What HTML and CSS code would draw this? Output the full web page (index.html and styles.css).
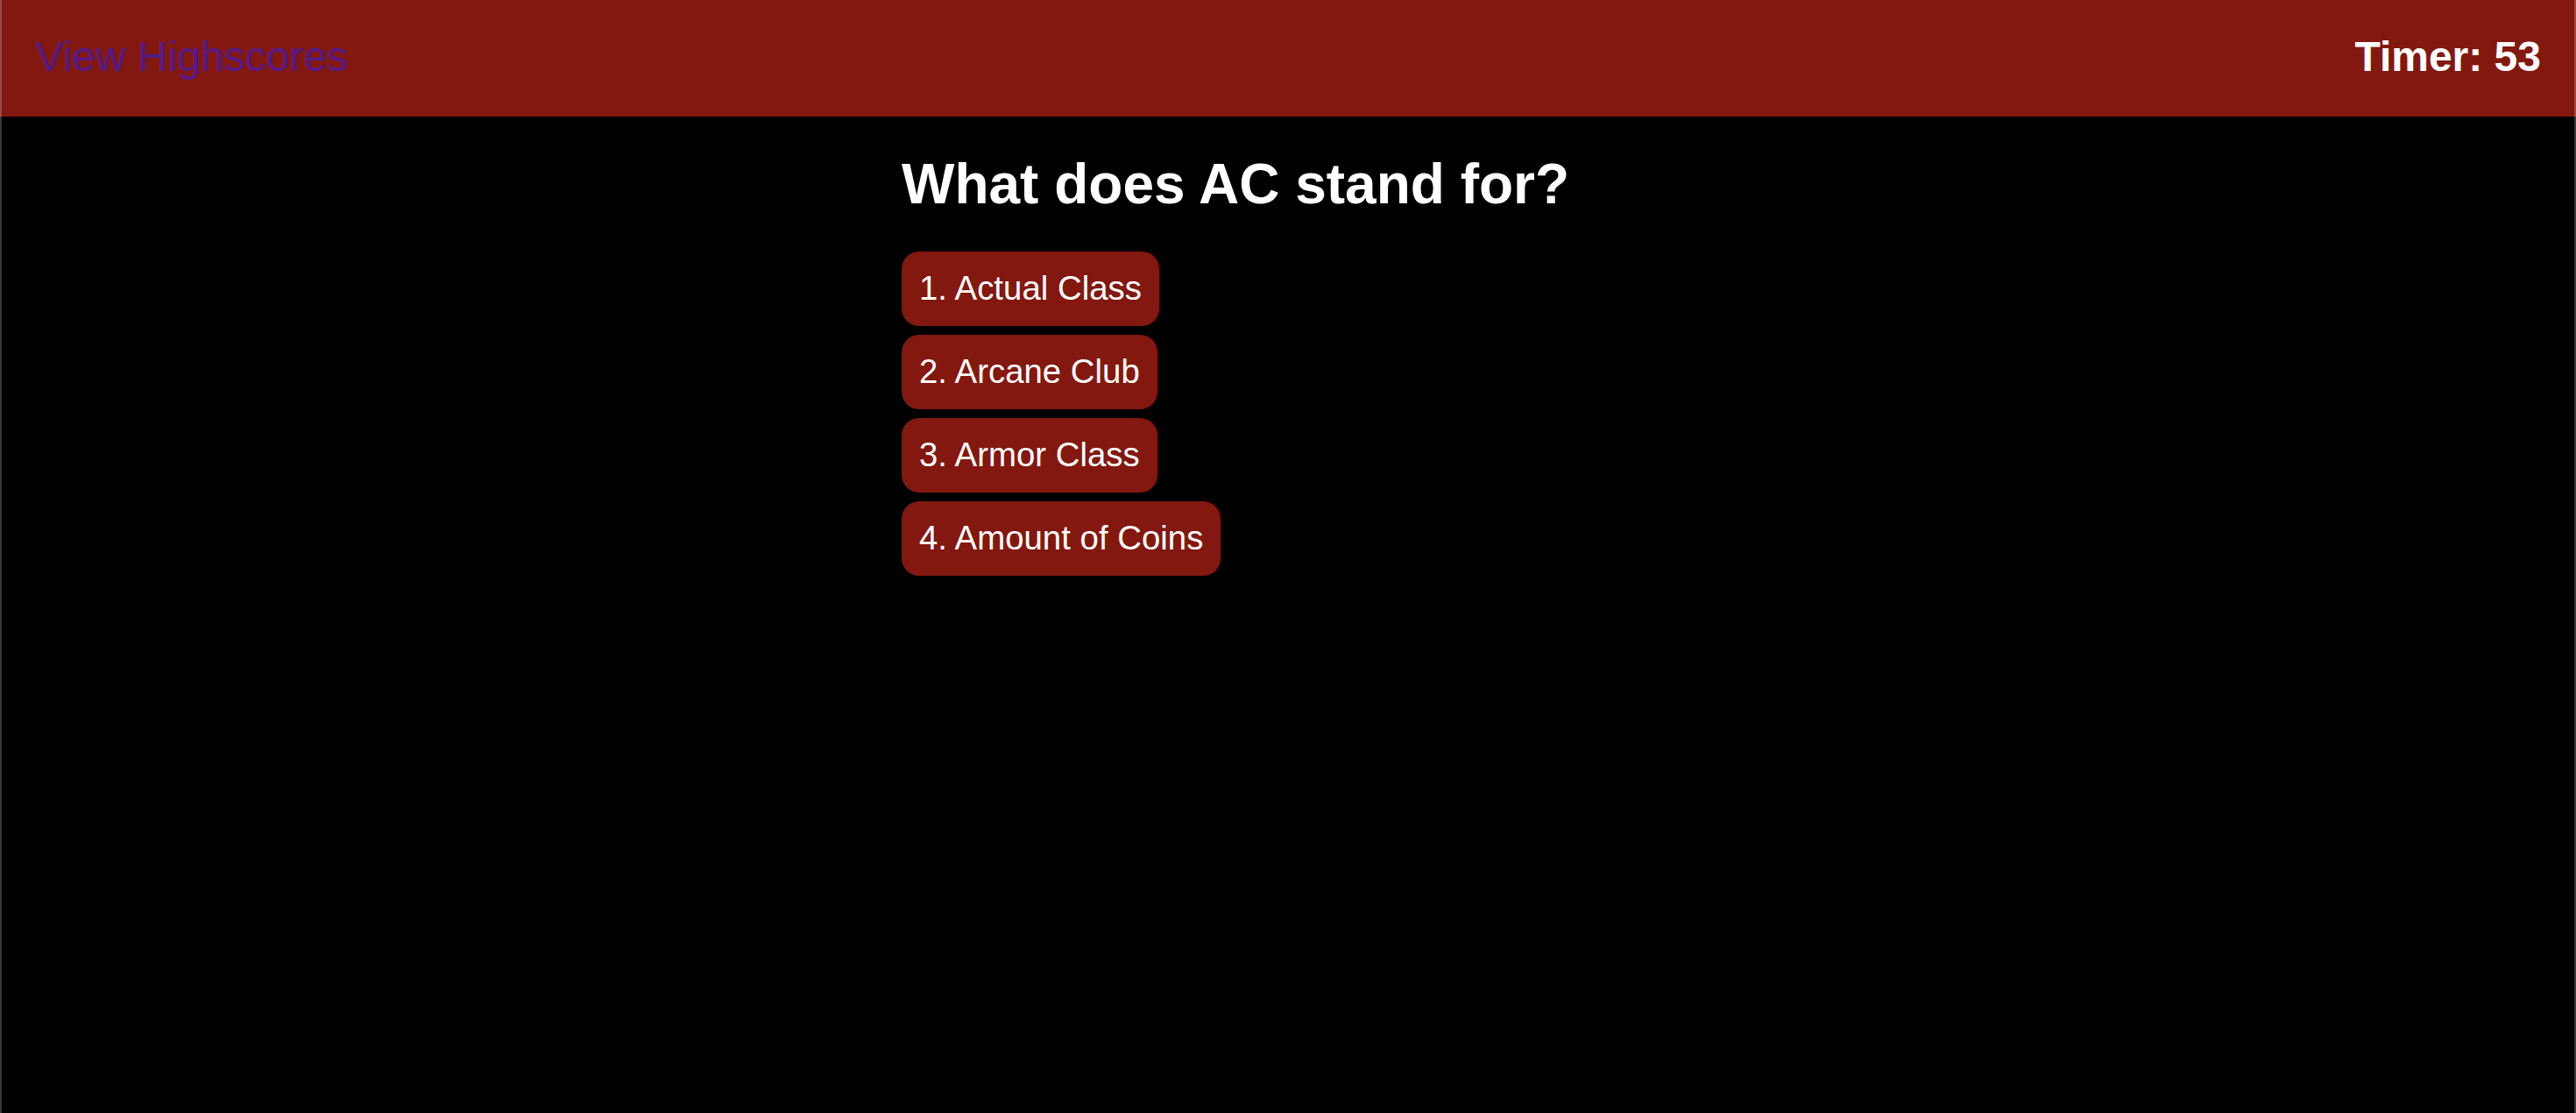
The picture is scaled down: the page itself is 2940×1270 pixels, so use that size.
FILE: index.html
```html
<!DOCTYPE html>
<html lang="en">
<head>
<meta charset="utf-8">
<title>Quiz</title>
<link rel="stylesheet" href="styles.css">
</head>
<body>
<header class="topbar">
  <a class="highscores" href="#">View Highscores</a>
  <div class="timer">Timer: 53</div>
</header>
<main class="quiz">
  <h2 class="question">What does AC stand for?</h2>
  <div class="choices">
    <button class="choice">1. Actual Class</button>
    <button class="choice">2. Arcane Club</button>
    <button class="choice">3. Armor Class</button>
    <button class="choice">4. Amount of Coins</button>
  </div>
</main>
<div class="frame"></div>
</body>
</html>
```
FILE: styles.css
```css
html, body {
  margin: 0;
  padding: 0;
  background: #000;
  height: 100%;
}
body {
  font-family: "Liberation Sans", Arial, sans-serif;
  color: #fff;
}
.topbar {
  box-sizing: border-box;
  height: 133px;
  padding: 37px 40px 0 40px;
  background: #821810;
  display: flex;
  justify-content: space-between;
  align-items: flex-start;
}
.highscores {
  font-size: 48px;
  line-height: 55px;
  color: #551a8b;
  text-decoration: none;
}
.timer {
  font-size: 48px;
  line-height: 55px;
  font-weight: bold;
  color: #fff;
}
.quiz {
  width: 30%;
  margin: 0 auto;
}
.question {
  font-size: 64px;
  font-weight: bold;
  line-height: 74px;
  margin: 40px 0 40px 0;
}
.choices {
  display: flex;
  flex-direction: column;
  align-items: flex-start;
  gap: 10px;
}
.choice {
  font-family: "Liberation Sans", Arial, sans-serif;
  font-size: 38.4px;
  line-height: 44px;
  color: #fff;
  background: #821810;
  border: none;
  border-radius: 20px;
  padding: 20px 20px 21px 20px;
  cursor: pointer;
}
.frame {
  position: fixed;
  inset: 0;
  border-left: 2px solid rgba(255, 255, 255, 0.22);
  border-right: 2px solid rgba(255, 255, 255, 0.22);
  pointer-events: none;
}
```
